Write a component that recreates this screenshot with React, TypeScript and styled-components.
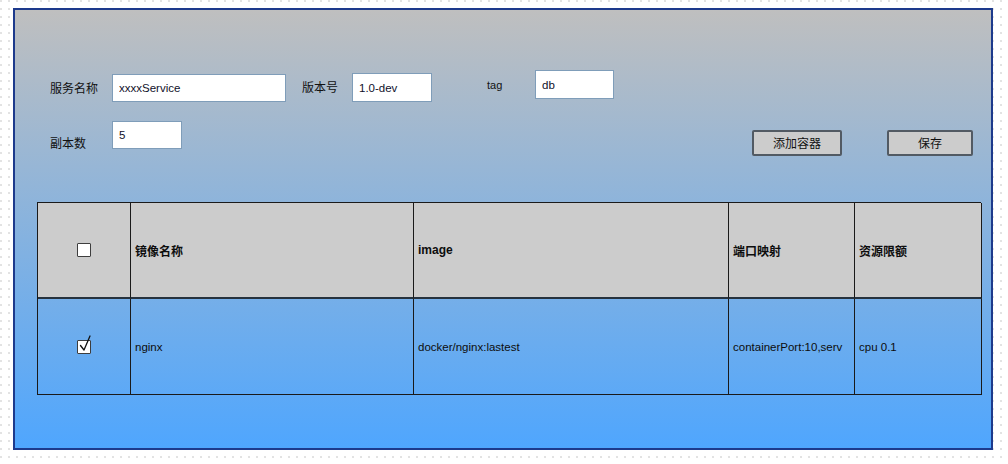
import React from "react";
import styled, { createGlobalStyle } from "styled-components";

const Global = createGlobalStyle`
  html, body { margin: 0; padding: 0; }
  body {
    width: 1008px;
    height: 464px;
    overflow: hidden;
    background-color: #ffffff;
    background-image: radial-gradient(circle, #d9d9d9 0.6px, transparent 1px);
    background-size: 8px 8px;
    background-position: -3px -3px;
    font-family: "Noto Sans CJK SC", "Liberation Sans", sans-serif;
  }
`;

const Page = styled.div`
  padding: 8px 0 0 13px;
`;

const Panel = styled.div`
  box-sizing: border-box;
  width: 980px;
  height: 442px;
  border: 2px solid #1d3a8c;
  background: linear-gradient(to bottom, #bfbfbf 0%, #4fa6fe 100%);
  display: flex;
  flex-direction: column;
`;

const Form = styled.div`
  display: flex;
  flex-direction: column;
  padding: 63px 18px 0 35px;
`;

const Row = styled.div<{ $top?: number }>`
  display: flex;
  align-items: flex-start;
  margin-top: ${(p) => p.$top ?? 0}px;
`;

const Label = styled.span<{ $w: number; $top?: number; $lh?: number; $ml?: number; $small?: boolean }>`
  display: block;
  width: ${(p) => p.$w}px;
  margin: ${(p) => p.$top ?? 0}px 0 0 ${(p) => p.$ml ?? 0}px;
  line-height: ${(p) => p.$lh ?? 28}px;
  font-family: ${(p) => (p.$small ? `"Liberation Sans", "Noto Sans CJK SC", sans-serif` : `"Noto Sans CJK SC", "Liberation Sans", sans-serif`)};
  font-size: ${(p) => (p.$small ? 11 : 12)}px;
  color: #111;
  white-space: nowrap;
`;

const Field = styled.input<{ $w: number; $h: number; $top?: number }>`
  box-sizing: border-box;
  width: ${(p) => p.$w}px;
  height: ${(p) => p.$h}px;
  margin: ${(p) => p.$top ?? 0}px 0 0 0;
  padding: 0 0 0 6px;
  border: 1px solid #7f9db9;
  background: #ffffff;
  font-family: "Liberation Sans", sans-serif;
  font-size: 11.5px;
  color: #10102a;
  outline: none;
`;

const Spacer = styled.div`
  flex: 1;
`;

const Button = styled.button<{ $w: number; $ml?: number }>`
  box-sizing: border-box;
  width: ${(p) => p.$w}px;
  height: 26px;
  margin: 9px 0 0 ${(p) => p.$ml ?? 0}px;
  padding: 0;
  border: 2px solid #525a63;
  border-radius: 2px;
  background: #cccccc;
  font-family: "Noto Sans CJK SC", sans-serif;
  font-size: 12px;
  color: #111;
  line-height: 22px;
`;

const Table = styled.div`
  box-sizing: border-box;
  margin: 45px 0 0 22px;
  width: 944px;
  display: grid;
  grid-template-columns: 93px 283px 315px 126px 127px;
  grid-template-rows: 96px 96px;
  border-top: 1px solid #1a1a1a;
  border-left: 1px solid #1a1a1a;
`;

const Cell = styled.div<{ $head?: boolean; $center?: boolean }>`
  box-sizing: border-box;
  display: flex;
  align-items: center;
  justify-content: ${(p) => (p.$center ? "center" : "flex-start")};
  padding-left: ${(p) => (p.$center ? 0 : 4)}px;
  border-right: 1px solid #1a1a1a;
  border-bottom: ${(p) => (p.$head ? "2px solid #26323e" : "1px solid #1a1a1a")};
  background: ${(p) => (p.$head ? "#cccccc" : "transparent")};
  font-family: "Liberation Sans", "Noto Sans CJK SC", sans-serif;
  font-weight: ${(p) => (p.$head ? 700 : 400)};
  font-size: ${(p) => (p.$head ? 12 : 11.5)}px;
  color: #0d0d0d;
  white-space: nowrap;
  overflow: hidden;
`;

const Box = styled.span`
  position: relative;
  display: block;
  box-sizing: border-box;
  width: 14px;
  height: 14px;
  margin-left: -1px;
  background: #ffffff;
  border: 1.5px solid #3d3d3d;
  border-radius: 1px;
`;

const Tick = styled.svg`
  position: absolute;
  left: 1px;
  top: -6px;
  overflow: visible;
`;

const CheckBox = ({ checked }: { checked?: boolean }) => (
  <Box>
    {checked && (
      <Tick width="14" height="18" viewBox="0 0 14 18">
        <path d="M1.5 10.5 L5 15 L11 1" fill="none" stroke="#111" strokeWidth="1.3" strokeLinecap="round" strokeLinejoin="round" />
      </Tick>
    )}
  </Box>
);

export default function App() {
  return (
    <>
      <Global />
      <Page>
        <Panel>
          <Form>
            <Row>
              <Label $w={62} $top={1}>服务名称</Label>
              <Field $w={174} $h={28} $top={1} defaultValue="xxxxService" readOnly />
              <Label $w={50} $ml={16}>版本号</Label>
              <Field $w={80} $h={29} defaultValue="1.0-dev" readOnly />
              <Label $w={48} $lh={24} $ml={55} $small>tag</Label>
              <Field $w={79} $h={29} $top={-3} defaultValue="db" readOnly />
            </Row>
            <Row $top={19}>
              <Label $w={62} $top={8}>副本数</Label>
              <Field $w={70} $h={28} defaultValue="5" readOnly />
              <Spacer />
              <Button $w={90}>添加容器</Button>
              <Button $w={86} $ml={45}>保存</Button>
            </Row>
          </Form>
          <Table>
            <Cell $head $center><CheckBox /></Cell>
            <Cell $head>镜像名称</Cell>
            <Cell $head>image</Cell>
            <Cell $head>端口映射</Cell>
            <Cell $head>资源限额</Cell>
            <Cell $center><CheckBox checked /></Cell>
            <Cell>nginx</Cell>
            <Cell>docker/nginx:lastest</Cell>
            <Cell>containerPort:10,serv</Cell>
            <Cell>cpu 0.1</Cell>
          </Table>
        </Panel>
      </Page>
    </>
  );
}
